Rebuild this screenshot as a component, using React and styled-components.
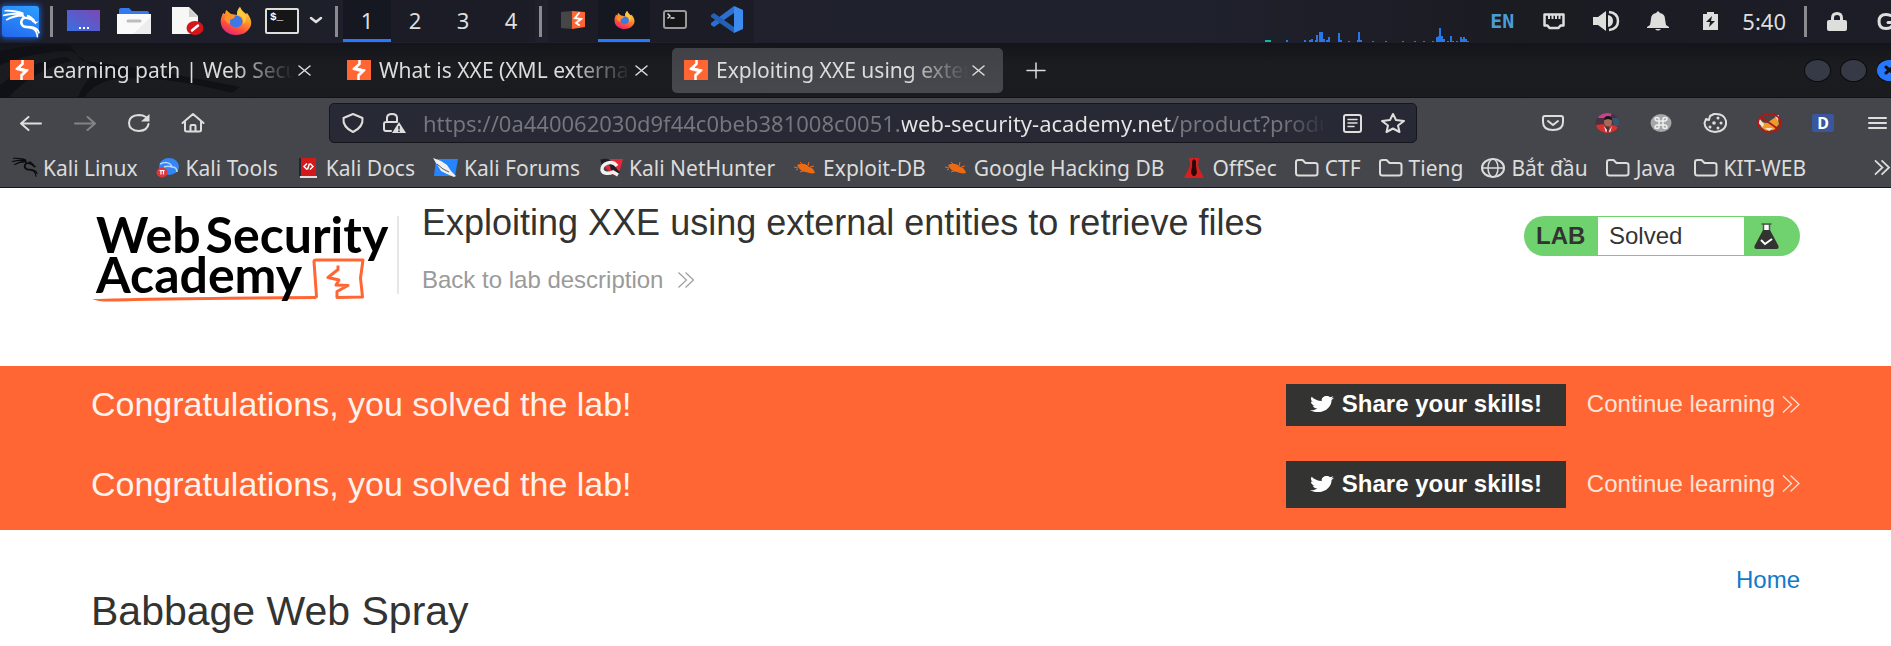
import React from "react";
import styled, { createGlobalStyle } from "styled-components";
import { SiKalilinux } from "react-icons/si";
import { FaTwitter } from "react-icons/fa";

const Global = createGlobalStyle`
  * { box-sizing: border-box; }
  body { margin: 0; background: #fff; font-family: "Liberation Sans", Arial, sans-serif; color: #333332; }
  button { border: 0; padding: 0; background: none; color: inherit; font: inherit; cursor: pointer; }
  a { color: inherit; text-decoration: none; }
  h1, h2, p { margin: 0; font-weight: 400; }
  svg { display: block; flex: none; overflow: visible; }
`;

const uiFont = `"Noto Sans", "Open Sans", sans-serif`;

/* ---------- desktop panel ---------- */

const Panel = styled.header`
  display: flex;
  align-items: center;
  height: 43px;
  padding-bottom: 1px;
  background: linear-gradient(90deg, #1d1e28 0, #1f212d 45%, #1f212d 62%, #1b1b22 80%, #1c1d27 100%);
  color: #dededc;
  font: 22px/24px ${uiFont};
  overflow: hidden;
`;

const MenuButton = styled.button`
  display: grid;
  place-items: center;
  width: 37px;
  height: 31px;
  margin: 0 11px 0 2px;
  border-radius: 3px;
  color: #fff;
  background: linear-gradient(200deg, #2da0ff, #2466ee);
  box-shadow: 0 0 5px 2px #1c4fae;
`;

const Rule = styled.span`
  flex: none;
  width: 3px;
  height: 31px;
  background: #8a8b8f;
`;

const Launchers = styled.nav`
  display: flex;
  align-items: center;
  gap: 16px;
  padding: 0 0 0 14px;
`;

const MoreLaunchers = styled.button`
  padding: 0 13px 0 9px;
`;

const Spaces = styled.nav`
  display: flex;
  height: 100%;
  padding: 0 4px 0 5px;
`;

const PanelButton = styled.button`
  display: grid;
  place-items: center;
  width: ${(p) => p.$w || 48}px;
  height: 42px;
  background: ${(p) => (p.$on ? "#161821" : "#1b1c25")};
  border-bottom: 3px solid ${(p) => (p.$on ? "#2777ff" : "transparent")};
`;

const Tasks = styled.nav`
  display: flex;
  height: 100%;
  padding-left: 6px;
`;

const GraphBox = styled.div`
  align-self: flex-end;
  margin: 0 19px 0 auto;
`;

const Tray = styled.div`
  display: flex;
  align-items: center;
  gap: 24px;
`;

const TraySlot = styled.button`
  display: grid;
  place-items: center;
  width: 28px;
  height: 28px;
`;

const Language = styled(TraySlot)`
  color: #4b9bd6;
  font: 700 20px/24px "DejaVu Sans Mono", monospace;
`;

const Clock = styled.time`
  margin: 0 18px;
`;

const Session = styled.div`
  display: flex;
  align-items: center;
  gap: 26px;
  padding-left: 16px;
`;

const Clip = styled.div`
  width: 14px;
  flex: none;
  overflow: hidden;
`;

/* ---------- browser window ---------- */

const TabBar = styled.div`
  position: relative;
  display: flex;
  align-items: center;
  height: 55px;
  background: linear-gradient(#14151a, #1b1c20 40%, #1a1b1f);
  border-bottom: 1px solid #101114;
  color: #dcdcda;
  font: 21px/30px ${uiFont};
  overflow: hidden;
`;

const Wallpaper = styled.svg`
  position: absolute;
  left: 0;
  top: 0;
`;

const Tabs = styled.div`
  position: relative;
  display: flex;
  gap: 6px;
  margin-left: -2px;
`;

const TabItem = styled.div`
  display: flex;
  align-items: center;
  width: 331px;
  height: 45px;
  padding: 0 15px 0 12px;
  border-radius: 5px;
  background: ${(p) => (p.$on ? "linear-gradient(#404247, #46484e)" : "none")};
`;

const TabLabel = styled.button`
  display: flex;
  align-items: center;
  gap: 8px;
  flex: 1;
  min-width: 0;
`;

const TabTitle = styled.span`
  flex: 1;
  overflow: hidden;
  white-space: nowrap;
  text-align: left;
  mask-image: linear-gradient(90deg, #000 calc(100% - 60px), transparent);
`;

const CloseTab = styled.button`
  display: grid;
  place-items: center;
  width: 20px;
  height: 24px;
`;

const NewTab = styled.button`
  position: relative;
  display: grid;
  place-items: center;
  width: 32px;
  height: 32px;
  margin-left: 17px;
`;

const WindowButtons = styled.div`
  display: flex;
  align-items: center;
  gap: 11px;
  margin-left: auto;
`;

const Round = styled.button`
  display: grid;
  place-items: center;
  width: 25px;
  height: 21px;
  border-radius: 50%;
  color: #11131a;
  background: ${(p) => (p.$blue ? "#2777ff" : "#363a47")};
  box-shadow: 0 0 0 1px #0b0c0e;
`;

const Toolbar = styled.div`
  display: flex;
  align-items: center;
  height: 50px;
  padding: 0 2px 0 19px;
  background: #44464c;
  color: #dedfdd;
`;

const IconGroup = styled.div`
  display: flex;
  align-items: center;
  gap: 30px;
`;

const IconButton = styled.button`
  display: grid;
  place-items: center;
  width: 24px;
  height: 32px;
  opacity: ${(p) => (p.$dim ? 0.4 : 1)};
`;

const AddressBar = styled.div`
  display: flex;
  align-items: center;
  flex: 1;
  min-width: 0;
  height: 40px;
  margin: 0 124px;
  padding: 0 11px;
  gap: 17px;
  border: 1px solid #15161b;
  border-radius: 5px;
  background: #272935;
`;

const Address = styled.input`
  flex: 1;
  min-width: 0;
  height: 36px;
  padding: 0;
  border: 0;
  outline: 0;
  font: 22px/36px ${uiFont};
  color: transparent;
  background: linear-gradient(90deg, #75767e 479px, #e6e6e4 479px, #e6e6e4 750px, #75767e 750px, #75767e 860px, transparent 905px);
  background-clip: text;
`;

const Bookmarks = styled.nav`
  display: flex;
  align-items: center;
  gap: 18px;
  height: 40px;
  padding: 0 0 0 12px;
  background: #44464c;
  border-bottom: 1px solid #17181b;
  color: #dcdcda;
  font: 21px/30px ${uiFont};
  overflow: hidden;
`;

const Bookmark = styled.a`
  display: flex;
  align-items: center;
  gap: 6px;
  white-space: nowrap;
`;

const MoreBookmarks = styled.button`
  margin-left: auto;
`;

/* ---------- lab page ---------- */

const PageHeader = styled.header`
  display: flex;
  align-items: flex-start;
  height: 178px;
  padding: 16px 91px 0;
`;

const LogoLink = styled.a`
  position: relative;
  width: 306px;
  padding: 10px 0 0 5px;
  color: #000;
  font: 700 50px/40px Lato, sans-serif;
  white-space: nowrap;
`;

const LogoLine = styled.span`
  position: relative;
  display: flex;
  gap: 5px;
`;

const LogoMark = styled.svg`
  position: absolute;
  left: 0;
  top: 50px;
`;

const HeadRule = styled.span`
  width: 2px;
  height: 78px;
  margin: 12px 23px 0 0;
  background: #e6e6e6;
`;

const TitleBlock = styled.div`
  flex: 1;
`;

const Title = styled.h2`
  font-size: 36px;
  line-height: 38px;
`;

const BackLink = styled.a`
  display: inline-flex;
  align-items: center;
  gap: 14px;
  margin-top: 24px;
  color: #9a9a9a;
  font-size: 24px;
  line-height: 28px;
`;

const Badge = styled.div`
  display: flex;
  align-items: center;
  width: 276px;
  height: 40px;
  margin-top: 12px;
  padding: 1px 0;
  border-radius: 20px;
  background: #70d26e;
  font-size: 24px;
  line-height: 38px;
`;

const BadgeName = styled.strong`
  width: 74px;
  padding-left: 12px;
`;

const BadgeState = styled.p`
  width: 146px;
  padding-left: 11px;
  background: #fff;
`;

const BadgeIcon = styled.span`
  flex: 1;
  padding-left: 10px;
`;

const Banner = styled.section`
  display: flex;
  flex-direction: column;
  gap: 35px;
  padding: 18px 91px 22px;
  background: #ff6633;
  color: #fff;
`;

const BannerRow = styled.div`
  display: flex;
  align-items: center;
`;

const Congrats = styled.h2`
  flex: 1;
  font-size: 34px;
  line-height: 38px;
  padding-bottom: 2px;
  color: #fff2ec;
`;

const ShareButton = styled.button`
  display: flex;
  align-items: center;
  justify-content: center;
  gap: 8px;
  width: 280px;
  height: ${(p) => (p.$tall ? 47 : 42)}px;
  margin-right: 21px;
  padding-bottom: 2px;
  background: #333332;
  font-size: 24px;
  font-weight: 700;
`;

const Continue = styled.a`
  display: flex;
  align-items: center;
  gap: 7px;
  padding-bottom: 2px;
  color: #ffe4d9;
  font-size: 24px;
  line-height: 28px;
`;

const Main = styled.main`
  padding: 36px 91px 20px;
`;

const TopLinks = styled.nav`
  display: flex;
  justify-content: flex-end;
  color: #0f7ac8;
  font-size: 24px;
  line-height: 28px;
`;

const ProductTitle = styled.h1`
  font-size: 41px;
  line-height: 34px;
`;

/* ---------- drawings ---------- */

const line = { fill: "none", stroke: "currentColor", strokeWidth: 2, strokeLinecap: "round", strokeLinejoin: "round" };

const Firefox = ({ w, h, id }) => (
  <svg width={w} height={h} viewBox="0 0 32 28" preserveAspectRatio="none">
    <defs>
      <linearGradient id={id} x1="0.8" y1="0" x2="0.3" y2="1">
        <stop offset="0" stopColor="#ffe14a" />
        <stop offset="0.4" stopColor="#ff9a2b" />
        <stop offset="0.75" stopColor="#ff4a3d" />
        <stop offset="1" stopColor="#e3237f" />
      </linearGradient>
    </defs>
    <path fill={`url(#${id})`} d="M17 8C17 4 18 2 20 0c1 3 4 5 6 7l1-1c3 4 5 8 4 12-2 6-7 10-15 10S2 23 1 17c-1-5 1-8 2-11l2 1 1-4c2 1 3 3 5 4z" />
    <ellipse cx="16" cy="14.500" rx="6.500" ry="6" fill="#3d78e8" />
    <path fill="#ff9126" d="M5 10c3-2 7-2 10-1 0 2-3 3-5 4 1 4-2 5-3 2C5 14 4 12 5 10z" />
    <path fill="#ffc93c" d="M17 8c4 0 8 4 6 9 3-2 4-6 2-9-3-3-4-4-5-8-2 2-3 5-3 8z" />
  </svg>
);

const Burp = () => (
  <svg width="24" height="20" viewBox="0 0 24 20">
    <path fill="#ff6633" d="M0 0h24v20H0z" />
    <path fill="none" stroke="#fff" strokeWidth="2.500" d="M12.500 0v4L7.500 8.500l9 2L11.500 15v5" />
    <path fill="#fff" d="M6 8l5-4v4l7 1.500v1.500l-5 5v-4L6 10z" opacity=".75" />
  </svg>
);

const Close = () => (
  <svg width="13" height="11" viewBox="0 0 13 11"><path {...line} strokeWidth="1.500" d="M1 1l11 9M12 1L1 10" /></svg>
);

const Chevrons = ({ w = 18, h = 17, sw = 1.2 }) => (
  <svg width={w} height={h} viewBox="0 0 18 17"><path {...line} strokeLinecap="butt" strokeLinejoin="miter" strokeWidth={sw} d="M1 .500l8.500 8L1 16.500M8.500 .500l8.500 8-8.500 8" /></svg>
);

const Folder = () => (
  <svg width="24" height="18" viewBox="0 0 24 18"><path {...line} d="M1 14V3q0-2 2.500-2h4l3 3H20q2.500 0 2.500 2v8.500q0 2-2.500 2H3.500Q1 16.500 1 14z" /></svg>
);

const Dragon = styled(SiKalilinux).attrs({ preserveAspectRatio: "none" })`
  width: ${(p) => (p.$large ? 36 : 25)}px;
  height: ${(p) => (p.$large ? 36 : 25)}px;
  color: ${(p) => (p.$large ? "#fff" : "#0d0d10")};
  stroke: currentColor;
  stroke-width: 1px;
`;

const Bird = styled(FaTwitter).attrs({ preserveAspectRatio: "none" })`
  width: 24px;
  height: 20px;
`;

const Bug = () => (
  <svg width="24" height="20" viewBox="0 0 24 20">
    <path fill="#ee6a12" d="M4 7c4-2 9-2 12 2 3 0 5 3 6 6-3 1-6 0-9-1-4 0-7-3-9-7z" />
    <path fill="none" stroke="#ee6a12" d="M1 9l4 1M7 4l4 4M16 4l-1 4M17 9l4-1M10 13l-3 1M5 11l-2 1" />
  </svg>
);

const marks = {
  linux: <Dragon />,
  tools: (
    <svg width="24" height="20" viewBox="0 0 24 20">
      <ellipse cx="13" cy="8.500" rx="10" ry="8.500" fill="#3487f2" />
      <path d="M4 6c6-3 11-1 12 3 3 0 5 2 5 5M8 9c3-1 5-1 8 0" fill="none" stroke="#b7d7ff" strokeWidth="1.500" />
      <ellipse cx="6" cy="14.500" rx="5.500" ry="5" fill="#e0353a" />
      <path d="M3.500 12.500h5M5 12.500v4M7.500 12.500v4" stroke="#fff" strokeWidth="1.200" />
    </svg>
  ),
  docs: (
    <svg width="24" height="20" viewBox="0 0 24 20">
      <path fill="#20252f" d="M3 0h4v18H3z" /><path fill="#d3191c" d="M5 0h15v18H5z" /><path fill="#e9dede" d="M4 18h17v2H4z" />
      <path d="M11 5.500L8 8.500l3 3M14 5.500l3 3-3 3M13.500 5.500l-2 6" fill="none" stroke="#fff" strokeWidth="1.500" />
    </svg>
  ),
  forums: (
    <svg width="25" height="20" viewBox="0 0 25 20">
      <path fill="#2584ff" d="M3 1h22l-3 17H1z" />
      <path fill="#f1f1ef" d="M0 0l8 3 6 4 4 6 5 5-2 1-7-3-6-3-3-5-2-3z" /><path d="M4 6l6 5 6 3" stroke="#555" fill="none" />
    </svg>
  ),
  nethunter: (
    <svg width="25" height="20" viewBox="0 0 25 20">
      <path fill="#ea2739" d="M6 1h19l-4 14-6 2L6 8z" />
      <path fill="none" stroke="#1d1f24" strokeWidth="5" d="M3 4c7-2 12 1 12 6l5 6" />
      <path fill="none" stroke="#f2f2f0" strokeWidth="3.500" d="M19 8C14 1 3 6 4 12c1 4 7 4 11 2l5 3" />
    </svg>
  ),
  bug: <Bug />,
  offsec: (
    <svg width="24" height="20" viewBox="0 0 24 20">
      <path fill="#d91e20" d="M7 0h10l-1 8 6 12H2l6-12z" />
      <path fill="#2a0808" d="M10 3l2-2 2 2v5l1 7-2 3h-2l-2-3 1-7z" />
    </svg>
  ),
  folder: <Folder />,
  globe: (
    <svg width="24" height="20" viewBox="0 0 24 20"><ellipse cx="12" cy="10" rx="11" ry="9" {...line} /><ellipse cx="12" cy="10" rx="5" ry="9" {...line} strokeWidth="1.500" /><path {...line} strokeWidth="1.500" d="M1 10h22" /></svg>
  ),
};

const bars = [[21, 2], [39, 2], [44, 2], [46, 3], [50, 2], [51, 7], [54, 10], [56, 10], [58, 3], [61, 2], [63, 5], [73, 9], [75, 2], [83, 1], [92, 2], [93, 10], [95, 2], [107, 1], [120, 1], [137, 1], [149, 1], [158, 1], [167, 1], [171, 5], [173, 6], [174, 14], [176, 6], [178, 3], [182, 1], [185, 6], [187, 1], [191, 1], [195, 5], [197, 3], [198, 5], [200, 3], [202, 1]];

const LoadGraph = () => (
  <svg width="204" height="14" viewBox="0 0 204 14" aria-hidden="true">
    <path fill="#10b7a6" d="M0 12h6v2H0z" />
    {bars.map(([x, h], i) => <rect key={i} x={x} y={14 - h} width="2" height={h} fill="#2777e8" />)}
  </svg>
);

const bookmarkList = [
  ["linux", "Kali Linux"], ["tools", "Kali Tools"], ["docs", "Kali Docs"], ["forums", "Kali Forums"],
  ["nethunter", "Kali NetHunter"], ["bug", "Exploit-DB"], ["bug", "Google Hacking DB"], ["offsec", "OffSec"],
  ["folder", "CTF"], ["folder", "Tieng"], ["globe", "Bắt đầu"], ["folder", "Java"], ["folder", "KIT-WEB"],
];

const tabList = ["Learning path | Web Secur", "What is XXE (XML external", "Exploiting XXE using exter"];

function DesktopPanel() {
  return (
    <Panel>
      <MenuButton aria-label="Applications"><Dragon $large /></MenuButton>
      <Rule />
      <Launchers>
        <button aria-label="Show desktop">
          <svg width="34" height="26" viewBox="0 0 34 26">
            <defs><linearGradient id="desk" x1="0" y1="1" x2="1" y2="0"><stop offset="0" stopColor="#3a6fe0" /><stop offset="1" stopColor="#7b48b4" /></linearGradient></defs>
            <path fill="url(#desk)" d="M0 2h33v21H0z" /><path stroke="#fff" strokeWidth="2" strokeDasharray="2 2" d="M12 20h10" />
          </svg>
        </button>
        <button aria-label="Files">
          <svg width="34" height="26" viewBox="0 0 34 26"><path fill="#3579f0" d="M2 9V2q0-2 2-2h8l3 3h15q2 0 2 2v4z" /><path fill="#fafafa" d="M0 6h34v20H0z" /><path fill="#e4e4e4" d="M34 9v17H16z" opacity=".6" /><path stroke="#bdbdbb" strokeWidth="3" strokeLinecap="round" d="M11 13h12" /></svg>
        </button>
        <button aria-label="Text editor">
          <svg width="34" height="28" viewBox="0 0 34 28"><path fill="#f7f7f5" d="M5 0h17l9 9v18H5z" /><path fill="#cfcfcd" d="M22 1l9 9h-9z" /><ellipse cx="28" cy="21" rx="8.500" ry="7" fill="#d31619" /><path stroke="#fff" strokeWidth="2.500" strokeLinecap="round" d="M25 23.500l6-5" /></svg>
        </button>
        <button aria-label="Firefox"><svg width="34" height="28" viewBox="0 0 34 28"><g transform="translate(3 0)"><Firefox w={32} h={28} id="ff1" /></g></svg></button>
        <button aria-label="Terminal">
          <svg width="34" height="26" viewBox="0 0 34 26"><rect x="-1" y="1" width="32" height="24" rx="1" fill="#161618" stroke="#dededc" strokeWidth="2" /><text x="3" y="12" fill="#fff" fontSize="11" fontWeight="700" fontFamily="Liberation Mono, monospace">$_</text></svg>
        </button>
      </Launchers>
      <MoreLaunchers aria-label="More terminals"><svg width="12" height="6" viewBox="0 0 12 6"><path {...line} strokeWidth="2.500" d="M1 0l5 4 5-4" /></svg></MoreLaunchers>
      <Rule />
      <Spaces>
        {[1, 2, 3, 4].map((n) => <PanelButton key={n} $on={n === 1}>{n}</PanelButton>)}
      </Spaces>
      <Rule />
      <Tasks>
        <PanelButton $w={50} aria-label="Burp Suite">
          <svg width="24" height="20" viewBox="0 0 24 20"><path fill="#464646" d="M0 2l11-1v18L0 18z" /><path fill="#ff6633" d="M11 1l13 1v15l-13 2z" /><path {...line} stroke="#fff" strokeLinejoin="miter" d="M18 3l-4 5 6 1-5 4 3 2" /></svg>
        </PanelButton>
        <PanelButton $w={52} $on aria-label="Firefox window"><Firefox w={21} h={18} id="ff2" /></PanelButton>
        <PanelButton $w={50} aria-label="Terminal window">
          <svg width="24" height="19" viewBox="0 0 24 19"><rect x="1" y="1" width="22" height="17" rx="2" fill="#161618" stroke="#99999a" strokeWidth="2" /><path {...line} strokeWidth="1.500" d="M5 4l2 2-2 2M8 8h3" /></svg>
        </PanelButton>
        <PanelButton $w={54} aria-label="Code editor">
          <svg width="33" height="28" viewBox="0 0 33 28"><path fill="#2d6fd0" d="M23 0v7L3 21l-3-2v-2z" /><path fill="#2460b4" d="M0 9l3-2 20 14v6L0 11z" /><path fill="#3c8cf0" d="M23 0l9 4v19l-9 4z" /></svg>
        </PanelButton>
      </Tasks>
      <GraphBox><LoadGraph /></GraphBox>
      <Tray>
        <Language>EN</Language>
        <TraySlot aria-label="Network"><svg width="22" height="17" viewBox="0 0 22 17"><path {...line} strokeWidth="2.500" d="M1.500 1.500h19v11h-3l-2 2.500h-9l-2-2.500h-3z" /><path {...line} strokeLinecap="butt" d="M6 2v4M9.500 2v4M13 2v4M16.500 2v4" /></svg></TraySlot>
        <TraySlot aria-label="Volume"><svg width="27" height="20" viewBox="0 0 27 20"><path fill="currentColor" d="M0 6h5l8-6v20l-8-6H0zM15 4q5 1 5 6t-5 6z" /><path {...line} strokeWidth="2.500" strokeLinecap="butt" d="M16 1q9 1 9 9t-9 9" /></svg></TraySlot>
        <TraySlot aria-label="Notifications"><svg width="22" height="20" viewBox="0 0 22 20"><path fill="currentColor" d="M11 0l2 2q5 1 5 6l1 6 3 2v1H0v-1l3-2 1-6q0-5 5-6zM8 18h6q-3 3-6 0z" /></svg></TraySlot>
        <TraySlot aria-label="Battery"><svg width="15" height="18" viewBox="0 0 15 18"><path fill="currentColor" d="M0 2h4V0h7v2h4v16H0z" /><path fill="#1b1c24" d="M9 4l-6 6h4l-1 5 6-6H8z" /></svg></TraySlot>
      </Tray>
      <Clock>5:40</Clock>
      <Rule />
      <Session>
        <TraySlot aria-label="Lock"><svg width="20" height="19" viewBox="0 0 20 19"><path fill="currentColor" d="M2 8h16q2 0 2 2v7q0 2-2 2H2q-2 0-2-2v-7q0-2 2-2z" /><path {...line} strokeWidth="3" d="M5.500 9V6q0-4.500 4.500-4.500T14.500 6v3" /></svg></TraySlot>
        <Clip><svg width="20" height="17" viewBox="0 0 20 17"><path {...line} strokeWidth="3" d="M14 2.500Q11 1.500 9 1.500q-7 0-7 7t7 7 7-6h-5" /></svg></Clip>
      </Session>
    </Panel>
  );
}

function BrowserChrome() {
  return (
    <>
      <TabBar>
        <Wallpaper width="260" height="55" viewBox="0 0 260 55" fill="#101116" aria-hidden="true">
          <path d="M0 8Q40 0 70 2l12 16Q130 22 240 44l-8 6q-60-16-110-15Q94 38 84 55H78q6-20 22-26L72 8Q34 8 0 22zM0 42q30-24 66-28l6 4Q34 26 8 55H0z" />
        </Wallpaper>
        <Tabs>
          {tabList.map((t, i) => (
            <TabItem key={t} $on={i === 2}>
              <TabLabel><Burp /><TabTitle>{t}</TabTitle></TabLabel>
              <CloseTab aria-label="Close tab"><Close /></CloseTab>
            </TabItem>
          ))}
        </Tabs>
        <NewTab aria-label="New tab"><svg width="18" height="15" viewBox="0 0 18 15"><path {...line} strokeWidth="1.500" d="M0 7.500h18M9 0v15" /></svg></NewTab>
        <WindowButtons>
          <Round aria-label="Minimize" /><Round aria-label="Maximize" />
          <Clip><Round $blue aria-label="Close"><svg width="9" height="8" viewBox="0 0 9 8"><path {...line} strokeWidth="3" d="M1 1l7 6M8 1L1 7" /></svg></Round></Clip>
        </WindowButtons>
      </TabBar>
      <Toolbar>
        <IconGroup>
          <IconButton aria-label="Back"><svg width="22" height="15" viewBox="0 0 22 15"><path {...line} d="M21 7.500H1M8.500 1L1 7.500 8.500 14" /></svg></IconButton>
          <IconButton $dim aria-label="Forward"><svg width="22" height="15" viewBox="0 0 22 15"><path {...line} d="M1 7.500h20M13.500 1L21 7.500 13.500 14" /></svg></IconButton>
          <IconButton aria-label="Reload"><svg width="22" height="18" viewBox="0 0 22 18"><path {...line} d="M18 3Q15 1 11 1 1 1.500 1 9t10 8q8.500-.500 9.500-7" /><path fill="currentColor" d="M21.500 0v7.500H13z" /></svg></IconButton>
          <IconButton aria-label="Home"><svg width="24" height="20" viewBox="0 0 24 20"><path {...line} d="M1.500 10L12 1l10.500 9M4 8.500V17q0 1.500 2 1.500h12q2 0 2-1.500V8.500M9.500 18v-5q0-1 1-1h3q1 0 1 1v5" /></svg></IconButton>
        </IconGroup>
        <AddressBar>
          <svg width="24" height="20" viewBox="0 0 24 20"><path {...line} d="M12 1l9.500 4q1 9-9.500 14Q1.500 14 2.500 5z" /></svg>
          <svg width="24" height="20" viewBox="0 0 24 20"><path {...line} d="M9 18H4q-2 0-2-2v-5q0-2 2-2h11M5 9V5q0-4 5-4t5 4v4" /><path fill="currentColor" d="M17 9l7 11H10z" /><path stroke="#272935" strokeWidth="1.500" d="M17 13v3.500M17 17.500v1.500" /></svg>
          <Address aria-label="Address" readOnly defaultValue="https://0a440062030d9f44c0beb381008c0051.web-security-academy.net/product?produ" />
          <svg width="24" height="19" viewBox="0 0 24 19"><rect x="4" y="1" width="17" height="17" rx="2" {...line} /><path {...line} strokeWidth="1.500" d="M8 5.500h9M8 9h9M8 12.500h6" /></svg>
          <svg width="24" height="20" viewBox="0 0 24 20"><path {...line} d="M12 1l3 6 8 1-6 4.500 1.500 6.500L12 15.500 5.500 19 7 12.500 1 8l8-1z" /></svg>
        </AddressBar>
        <IconGroup>
          <IconButton aria-label="Pocket"><svg width="22" height="16" viewBox="0 0 22 16"><path {...line} d="M3 1h16q2 0 2 2v4q0 8-10 8T1 7V3q0-2 2-2zM6 6l5 4 5-4" /></svg></IconButton>
          <IconButton aria-label="Profile">
            <svg width="25" height="20" viewBox="0 0 25 20"><defs><clipPath id="av"><ellipse cx="12.500" cy="10" rx="12" ry="10" /></clipPath></defs><g clipPath="url(#av)"><path fill="#493043" d="M0 0h25v20H0z" /><path fill="#c6438c" d="M5 0h12l-2 5H3z" /><path fill="#36566e" d="M17 5h8v8h-6z" /><path fill="#d8322e" d="M1 12l8-1 4 9H3zM15 11l8 3-3 6h-7z" /><ellipse cx="13" cy="9" rx="4" ry="4.500" fill="#a36a55" /><path fill="#1a1216" d="M9 7q0-4 4-4t4 4l-4-1z" /><path fill="#eee" d="M9 13l3 4-1 3zM17 13l-3 5 1 2z" /></g></svg>
          </IconButton>
          <IconButton aria-label="Shortcuts"><svg width="22" height="18" viewBox="0 0 22 18"><ellipse cx="11" cy="9" rx="10.500" ry="9" fill="#a6a7a9" /><path fill="none" stroke="#eee" strokeWidth="1.500" d="M9 7H7q-2-.500-2-2t2-1.500T9 5v8q0 1.500-2 1.500T5 13t2-2h8q2 .500 2 2t-2 1.500-2-1.500V5q0-1.500 2-1.500T17 5t-2 2z" /></svg></IconButton>
          <IconButton aria-label="Cookies"><svg width="24" height="20" viewBox="0 0 24 20"><path {...line} d="M11 1Q21 0 23 8q1 10-11 11Q2 18 1.500 10L3 6l3 1 1-4z" /><g fill="currentColor"><circle cx="15" cy="5" r="1.500" /><circle cx="11" cy="10" r="1.800" /><circle cx="18" cy="10" r="1.500" /><circle cx="15" cy="15" r="1.500" /><circle cx="7" cy="14" r="1.500" /></g></svg></IconButton>
          <IconButton aria-label="Proxy"><svg width="25" height="20" viewBox="0 0 25 20"><path fill="#f09a2c" d="M3 9l7 1 10-7 2 8-5 6-8 1-5-4z" /><path fill="#f7e5cf" d="M2 5l5 6-1 3-4-3zM18 3l4-1-1 6zM8 15h8l-4 3z" /><ellipse cx="12.500" cy="10" rx="11.500" ry="9" fill="none" stroke="#b61715" strokeWidth="1.800" /><path stroke="#b61715" strokeWidth="1.800" d="M4 4l17 12" /></svg></IconButton>
          <IconButton aria-label="Dictionary"><svg width="22" height="18" viewBox="0 0 22 18"><rect width="22" height="18" rx="2" fill="#3a569c" /><text x="11" y="14.500" textAnchor="middle" fill="#fff" fontSize="16" fontWeight="700" fontFamily="Noto Sans, sans-serif">D</text></svg></IconButton>
          <IconButton aria-label="Menu"><svg width="19" height="12" viewBox="0 0 19 12"><path {...line} d="M1 1h17M1 6h17M1 11h17" /></svg></IconButton>
        </IconGroup>
      </Toolbar>
      <Bookmarks>
        {bookmarkList.map(([icon, label]) => <Bookmark key={label} href="#">{marks[icon]}{label}</Bookmark>)}
        <MoreBookmarks aria-label="More bookmarks"><Chevrons w={18} h={15} sw={2} /></MoreBookmarks>
      </Bookmarks>
    </>
  );
}

function Congratulation({ tall }) {
  return (
    <BannerRow>
      <Congrats>Congratulations, you solved the lab!</Congrats>
      <ShareButton $tall={tall}><Bird />Share your skills!</ShareButton>
      <Continue href="#">Continue learning<Chevrons /></Continue>
    </BannerRow>
  );
}

export default function App() {
  return (
    <>
      <Global />
      <DesktopPanel />
      <BrowserChrome />
      <PageHeader>
        <LogoLink href="#">
          <LogoMark width="306" height="52" viewBox="0 0 306 52" fill="none" stroke="#ff6633" strokeWidth="3" aria-hidden="true">
            <path fill="#ff6633" stroke="none" d="M1 45q60-2 224-3v3Q70 46 20 47.500 8 48 1 45z" />
            <path strokeLinejoin="round" d="M224 43.500l1.500-1L223 7.500q0-1.500 2-1.500h47l-2.500 18 2 19-25.500.500v-6l11-6-12-.500 3-5-11-2.500 10-8v-4" />
          </LogoMark>
          <LogoLine><span>Web</span><span>Security</span></LogoLine>
          <LogoLine>Academy</LogoLine>
        </LogoLink>
        <HeadRule />
        <TitleBlock>
          <Title>Exploiting XXE using external entities to retrieve files</Title>
          <BackLink href="#">Back to lab description<Chevrons h={16} /></BackLink>
        </TitleBlock>
        <Badge>
          <BadgeName>LAB</BadgeName>
          <BadgeState>Solved</BadgeState>
          <BadgeIcon>
            <svg width="25" height="26" viewBox="0 0 25 26"><path fill="#333332" d="M9 7h7l8.500 16q.500 3-2 3H2.500q-2.500 0-2-3z" /><path fill="#fff" d="M10 2h5v5h-5z" /><path stroke="#555" strokeWidth="1.500" d="M7.500 1h10M9.500 1v6M15.500 1v6" /><path fill="none" stroke="#fff" strokeWidth="2" d="M7 17l4 4 7-5" /></svg>
          </BadgeIcon>
        </Badge>
      </PageHeader>
      <Banner>
        <Congratulation />
        <Congratulation tall />
      </Banner>
      <Main>
        <TopLinks><a href="#">Home</a></TopLinks>
        <ProductTitle>Babbage Web Spray</ProductTitle>
      </Main>
    </>
  );
}
